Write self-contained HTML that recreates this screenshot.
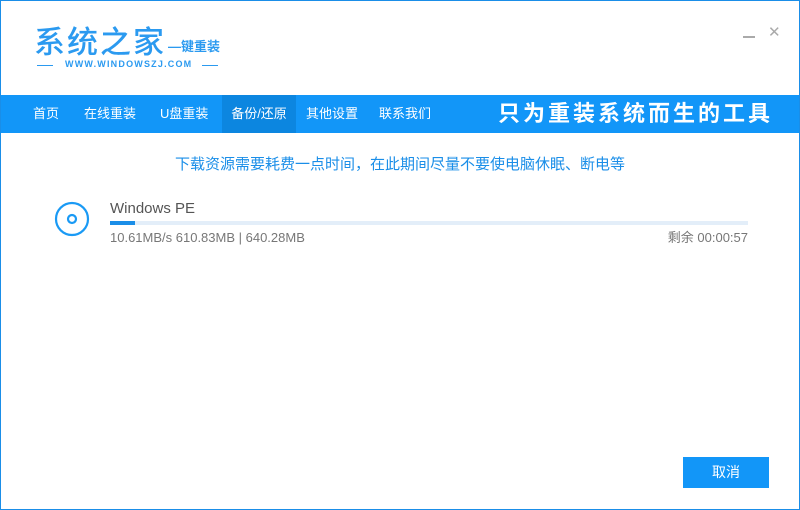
<!DOCTYPE html>
<html><head><meta charset="utf-8"><style>
*{margin:0;padding:0;box-sizing:border-box}
body{width:800px;height:510px;overflow:hidden;background:#fff;font-family:"Liberation Sans","Noto Sans CJK SC",sans-serif;position:relative}
.frame{position:absolute;left:0;top:0;width:800px;height:510px;border:1px solid #1a8ee8}
.a{position:absolute;white-space:nowrap}
.nav{position:absolute;left:1px;top:95px;width:798px;height:38px;background:#1296f8}
.nav span{position:absolute;top:0;height:38px;line-height:38px;color:#fff;font-size:13px}
</style></head><body>
<div class="frame"></div>
<div class="a" style="left:34px;top:17px;font-size:31px;color:#2b9af0;letter-spacing:2px;font-weight:500">系统之家</div>
<div class="a" style="left:168px;top:36px;font-size:13px;color:#2b9af0;font-weight:bold">—键重装</div>
<div class="a" style="left:37px;top:65px;width:16px;height:1px;background:#2b9af0"></div>
<div class="a" style="left:65px;top:59px;font-size:9px;color:#2b9af0;letter-spacing:1.2px;font-weight:bold">WWW.WINDOWSZJ.COM</div>
<div class="a" style="left:202px;top:65px;width:16px;height:1px;background:#2b9af0"></div>
<div class="a" style="left:743px;top:36px;width:12px;height:2px;background:#aaa"></div>
<div class="a" style="left:768px;top:23px;font-size:15px;color:#aaa">✕</div>
<div class="nav">
<span style="left:32px">首页</span>
<span style="left:83px">在线重装</span>
<span style="left:159px">U盘重装</span>
<span style="left:221px;width:74px;background:#0c86e0;text-align:center">备份/还原</span>
<span style="left:305px">其他设置</span>
<span style="left:378px">联系我们</span>
<span style="left:497px;font-size:22px;font-weight:bold;letter-spacing:3px">只为重装系统而生的工具</span>
</div>
<div class="a" style="left:0;width:800px;text-align:center;top:153px;font-size:15px;color:#1a8ee8">下载资源需要耗费一点时间，在此期间尽量不要使电脑休眠、断电等</div>
<svg class="a" style="left:54px;top:201px" width="36" height="36"><circle cx="18" cy="18" r="16" fill="none" stroke="#1a9af5" stroke-width="2.2"/><circle cx="18" cy="18" r="4" fill="none" stroke="#1a9af5" stroke-width="2.2"/></svg>
<div class="a" style="left:110px;top:200px;font-size:15px;color:#555">Windows PE</div>
<div class="a" style="left:110px;top:221px;width:638px;height:4px;background:#e3eef9"></div>
<div class="a" style="left:110px;top:221px;width:25px;height:4px;background:#1a8ee8"></div>
<div class="a" style="left:110px;top:230px;font-size:13px;color:#777">10.61MB/s 610.83MB | 640.28MB</div>
<div class="a" style="right:52px;top:229px;font-size:13px;color:#777;line-height:18px">剩余 00:00:57</div>
<div class="a" style="left:683px;top:457px;width:86px;height:31px;background:#1296f8;color:#fff;font-size:14px;line-height:31px;text-align:center">取消</div>
</body></html>
